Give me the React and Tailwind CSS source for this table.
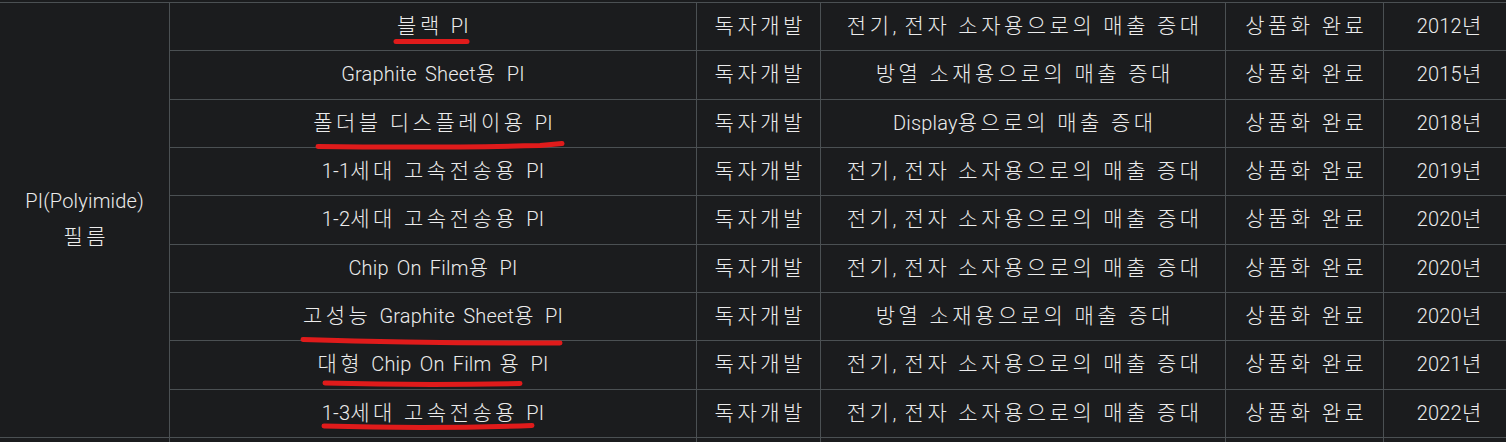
import React from "react";

const rows = [
  ["블랙 PI", "독자개발", "전기, 전자 소자용으로의 매출 증대", "상품화 완료", "2012년"],
  ["Graphite Sheet용 PI", "독자개발", "방열 소재용으로의 매출 증대", "상품화 완료", "2015년"],
  ["폴더블 디스플레이용 PI", "독자개발", "Display용으로의 매출 증대", "상품화 완료", "2018년"],
  ["1-1세대 고속전송용 PI", "독자개발", "전기, 전자 소자용으로의 매출 증대", "상품화 완료", "2019년"],
  ["1-2세대 고속전송용 PI", "독자개발", "전기, 전자 소자용으로의 매출 증대", "상품화 완료", "2020년"],
  ["Chip On Film용 PI", "독자개발", "전기, 전자 소자용으로의 매출 증대", "상품화 완료", "2020년"],
  ["고성능 Graphite Sheet용 PI", "독자개발", "방열 소재용으로의 매출 증대", "상품화 완료", "2020년"],
  ["대형 Chip On Film 용 PI", "독자개발", "전기, 전자 소자용으로의 매출 증대", "상품화 완료", "2021년"],
  ["1-3세대 고속전송용 PI", "독자개발", "전기, 전자 소자용으로의 매출 증대", "상품화 완료", "2022년"],
];

function T({ text }) {
  const parts = text.split(/([\uAC00-\uD7A3]+)/);
  const endsHangul = /[\uAC00-\uD7A3]$/.test(text);
  return (
    <span className={endsHangul ? "-mr-[3.5px]" : ""}>
      {parts.map((p, i) =>
        /[\uAC00-\uD7A3]/.test(p) ? (
          <span key={i} className="text-[21px] tracking-[3.5px]">
            {p}
          </span>
        ) : (
          <span key={i} className="tracking-[0.2px] [word-spacing:3px]">
            {p}
          </span>
        )
      )}
    </span>
  );
}

const cell =
  "h-[48.33px] flex items-center justify-center border-b border-r border-[#4b5053] whitespace-nowrap";

export default function App() {
  return (
    <div
      className="relative w-[1506px] h-[442px] overflow-hidden bg-[#1b1c1e] text-[#ececec] pt-[2px]"
      style={{ fontFamily: 'Roboto, "Noto Sans CJK KR", sans-serif' }}
    >
      <div className="grid w-[1514px] grid-cols-[170px_527px_124px_405px_158px_130px] border-t border-[#4b5053] text-[20px] font-light leading-none">
        <div className="row-span-9 flex flex-col items-center justify-center border-b border-r border-[#4b5053] gap-[16px]">
          <T text="PI(Polyimide)" />
          <T text="필름" />
        </div>
        {rows.map((r, i) => (
          <React.Fragment key={i}>
            <div className={cell}><T text={r[0]} /></div>
            <div className={cell}><T text={r[1]} /></div>
            <div className={cell}><T text={r[2]} /></div>
            <div className={cell}><T text={r[3]} /></div>
            <div className={cell + " border-r-0"}><T text={r[4]} /></div>
          </React.Fragment>
        ))}
        <div className={cell}></div>
        <div className={cell}></div>
        <div className={cell}></div>
        <div className={cell}></div>
        <div className={cell}></div>
        <div className={cell + " border-r-0"}></div>
      </div>

      <svg
        className="absolute left-0 top-0 pointer-events-none"
        width="1506"
        height="442"
        viewBox="0 0 1506 442"
        fill="none"
      >
        <g stroke="#e01b1b" strokeWidth="5" strokeLinecap="round" strokeLinejoin="round">
          <path d="M396 41.5 L467 41.5" />
          <path d="M318 146.5 Q440 148 540 145.5 L562 143.5" />
          <path d="M303 339.5 Q430 343.5 560 343" />
          <path d="M325 383 Q420 385.5 520 383.5" />
          <path d="M324 426 Q430 429 532 425.5" />
        </g>
      </svg>
    </div>
  );
}
